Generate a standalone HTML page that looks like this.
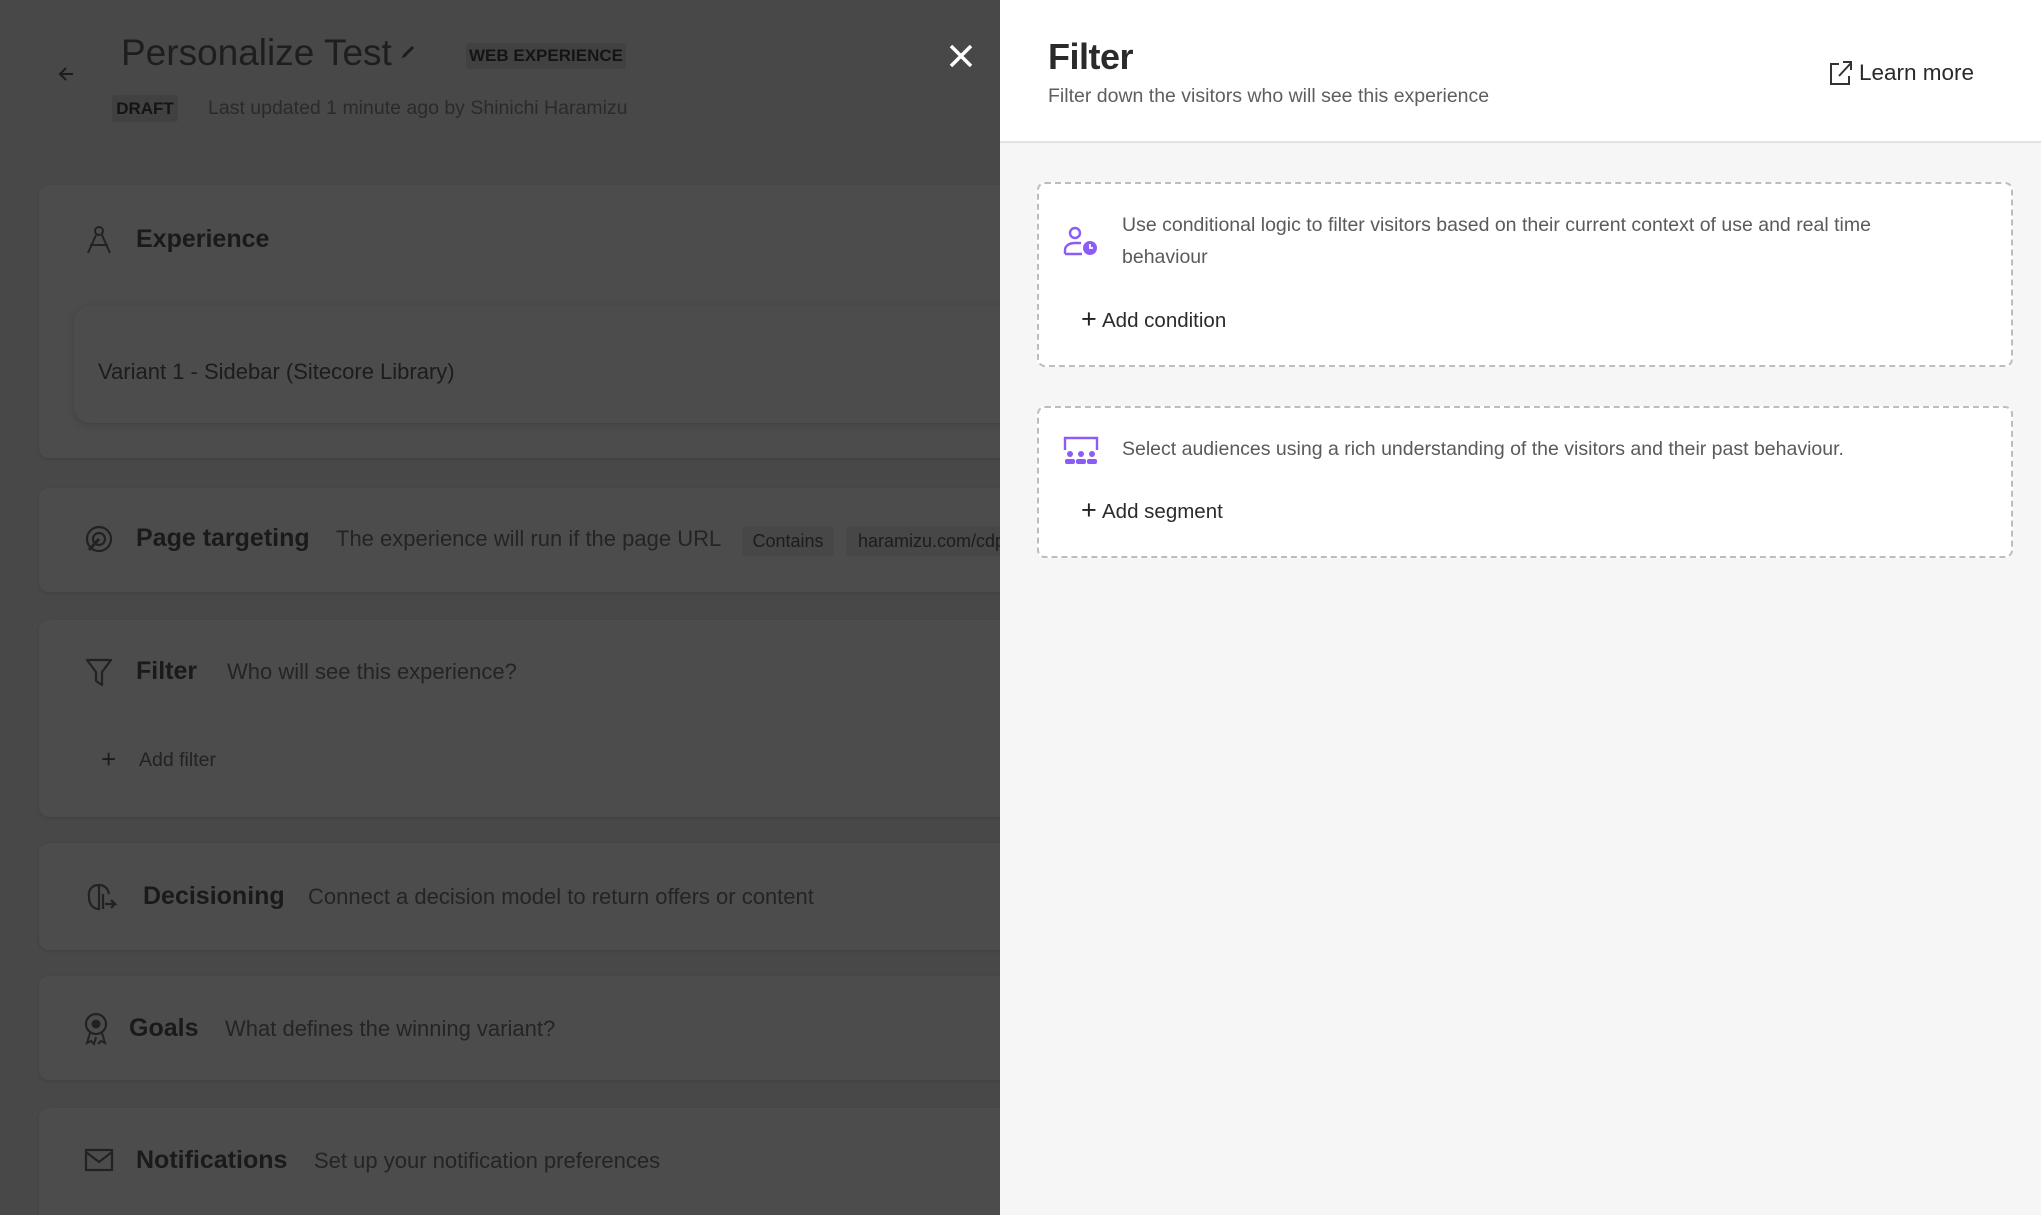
<!DOCTYPE html>
<html style="overflow:hidden;width:2041px;height:1215px"><head><meta charset="utf-8"><style>
*{box-sizing:border-box;margin:0;padding:0}
body{width:2041px;height:1215px;overflow:hidden;font-family:"Liberation Sans",sans-serif;background:#484848;position:relative}
.a{position:absolute;white-space:nowrap}
.card{position:absolute;left:39px;width:980px;background:#4c4c4c;border-radius:10px;box-shadow:0 1px 3px rgba(0,0,0,.12)}
.t{color:#1a1a1a;font-size:25px;font-weight:bold}
.d{color:#242424;font-size:22px}
.ic{position:absolute}
.panel{position:absolute;left:1000px;top:0;width:1041px;height:1215px;background:#f6f6f6}
.hdr{position:absolute;left:0;top:0;width:1041px;height:143px;background:#fff;border-bottom:2px solid #e2e2e2}
.box{position:absolute;left:37px;width:976px;border:2px dashed #bdbdbd;border-radius:8px;background:#fff}
.bt{color:#5a5a5a;font-size:19.5px;line-height:32px}
.add{color:#2b2b2b;font-size:20.5px}
</style></head><body>
<svg class="ic" style="left:56px;top:64px" width="20" height="20" viewBox="0 0 20 20"><path d="M17 10H4M10 4L4 10l6 6" stroke="#1c1c1c" stroke-width="2" fill="none"/></svg>
<div class="a" style="left:121px;top:32px;font-size:37px;color:#1e1e1e">Personalize Test</div>
<svg class="ic" style="left:400px;top:44px" width="16" height="16" viewBox="0 0 16 16"><path d="M3 13l2-1 8-8-1-1-8 8z" fill="#1c1c1c" stroke="#1c1c1c" stroke-width="1.5"/></svg>
<div class="a" style="left:466px;top:43px;width:160px;height:26px;background:#414141;border-radius:3px;color:#141414;font-weight:bold;font-size:17px;line-height:26px;text-align:center">WEB EXPERIENCE</div>
<div class="a" style="left:112px;top:95px;width:66px;height:27px;background:#414141;border-radius:3px;color:#141414;font-weight:bold;font-size:17px;line-height:27px;text-align:center">DRAFT</div>
<div class="a" style="left:208px;top:97px;font-size:19.5px;color:#2a2a2a">Last updated 1 minute ago by Shinichi Haramizu</div>
<svg class="ic" style="left:948px;top:43px" width="26" height="26" viewBox="0 0 26 26"><path d="M3 3L23 23M23 3L3 23" stroke="#fff" stroke-width="3.5"/></svg>

<div class="card" style="top:185px;height:273px"></div>
<svg class="ic" style="left:85px;top:225px" width="28" height="30" viewBox="0 0 28 30"><circle cx="14" cy="6" r="4" stroke="#222" stroke-width="2" fill="none"/><path d="M11 10L3 28M17 10l8 18M5 20h18" stroke="#222" stroke-width="2" fill="none"/></svg>
<div class="a t" style="left:136px;top:225px">Experience</div>
<div class="a" style="left:74px;top:306px;width:960px;height:117px;background:#4c4c4c;border-radius:16px;box-shadow:0 2px 8px rgba(0,0,0,.15)"></div>
<div class="a d" style="left:98px;top:359px;color:#1c1c1c">Variant 1 - Sidebar (Sitecore Library)</div>

<div class="card" style="top:488px;height:104px"></div>
<svg class="ic" style="left:84px;top:524px" width="30" height="30" viewBox="0 0 30 30"><circle cx="15" cy="15" r="12" stroke="#222" stroke-width="2.2" fill="none"/><circle cx="15" cy="15" r="6" stroke="#222" stroke-width="2.2" fill="none"/><path d="M15 15L5 26" stroke="#222" stroke-width="3"/></svg>
<div class="a t" style="left:136px;top:524px">Page targeting</div>
<div class="a d" style="left:336px;top:526px">The experience will run if the page URL</div>
<div class="a" style="left:742px;top:526px;width:92px;height:30px;background:#474747;border-radius:3px;font-size:18px;color:#1c1c1c;line-height:30px;text-align:center">Contains</div>
<div class="a" style="left:846px;top:526px;width:160px;height:30px;background:#474747;border-radius:3px;font-size:18px;color:#1c1c1c;line-height:30px;padding-left:12px;overflow:hidden">haramizu.com/cdp</div>

<div class="card" style="top:620px;height:197px"></div>
<svg class="ic" style="left:85px;top:657px" width="28" height="30" viewBox="0 0 28 30"><path d="M2 3h24L17 15v13l-6-4V15z" stroke="#222" stroke-width="2.2" fill="none" stroke-linejoin="round"/></svg>
<div class="a t" style="left:136px;top:657px">Filter</div>
<div class="a d" style="left:227px;top:659px">Who will see this experience?</div>
<div class="a" style="left:101px;top:744px;font-size:26px;color:#1c1c1c">+</div>
<div class="a" style="left:139px;top:749px;font-size:19.5px;color:#222">Add filter</div>

<div class="card" style="top:843px;height:107px"></div>
<svg class="ic" style="left:85px;top:882px" width="34" height="30" viewBox="0 0 34 30"><path d="M14 3C6 3 3 9 4 15c0 6 3 12 10 12V3zM14 3c5 0 9 3 10 9M18 12v15" stroke="#222" stroke-width="2.2" fill="none"/><path d="M20 22h10l-4-4M30 22l-4 4" stroke="#222" stroke-width="2.2" fill="none"/></svg>
<div class="a t" style="left:143px;top:882px">Decisioning</div>
<div class="a d" style="left:308px;top:884px">Connect a decision model to return offers or content</div>

<div class="card" style="top:976px;height:104px"></div>
<svg class="ic" style="left:84px;top:1012px" width="24" height="34" viewBox="0 0 24 34"><circle cx="12" cy="12" r="10" stroke="#222" stroke-width="2.2" fill="none"/><circle cx="12" cy="12" r="4.5" fill="#222"/><path d="M6 21l-3 10 4-2 3 3 2-7M18 21l3 10-4-2-3 3" stroke="#222" stroke-width="2" fill="none"/></svg>
<div class="a t" style="left:129px;top:1014px">Goals</div>
<div class="a d" style="left:225px;top:1016px">What defines the winning variant?</div>

<div class="card" style="top:1108px;height:107px;border-radius:10px 10px 0 0"></div>
<svg class="ic" style="left:84px;top:1148px" width="30" height="24" viewBox="0 0 30 24"><rect x="2" y="2" width="26" height="20" stroke="#222" stroke-width="2.2" fill="none"/><path d="M2 4l13 10 13-10" stroke="#222" stroke-width="2.2" fill="none"/></svg>
<div class="a t" style="left:136px;top:1146px">Notifications</div>
<div class="a d" style="left:314px;top:1148px">Set up your notification preferences</div>

<div class="panel">
<div class="hdr">
<div class="a" style="left:48px;top:36px;font-size:36px;color:#2a2a2a;font-weight:bold;letter-spacing:-.5px">Filter</div>
<div class="a" style="left:48px;top:85px;font-size:19.5px;color:#5e5e5e">Filter down the visitors who will see this experience</div>
<svg class="ic" style="left:829px;top:60px" width="24" height="26" viewBox="0 0 24 26"><path d="M10 4H2v20h18v-8" stroke="#333" stroke-width="2" fill="none"/><path d="M10 16L22 3M14 2h8v8" stroke="#333" stroke-width="2" fill="none"/></svg>
<div class="a" style="left:859px;top:60px;font-size:22.5px;color:#2a2a2a">Learn more</div>
</div>
<div class="box" style="top:182px;height:185px">
<svg class="ic" style="left:24px;top:42px" width="36" height="32" viewBox="0 0 36 32"><circle cx="12" cy="7" r="5" stroke="#8b5cf6" stroke-width="2.4" fill="none"/><path d="M2 28v-4c0-4 4-7 10-7h6M2 28h17" stroke="#8b5cf6" stroke-width="2.4" fill="none"/><circle cx="27" cy="22" r="7" fill="#8b5cf6"/><path d="M27 18v4h3" stroke="#fff" stroke-width="1.8" fill="none"/></svg>
<div class="a bt" style="left:83px;top:25px;white-space:normal;width:840px">Use conditional logic to filter visitors based on their current context of use and real time behaviour</div>
<div class="a" style="left:42px;top:120px;font-size:27px;color:#222">+</div>
<div class="a add" style="left:63px;top:125px">Add condition</div>
</div>
<div class="box" style="top:406px;height:152px">
<svg class="ic" style="left:24px;top:28px" width="36" height="30" viewBox="0 0 36 30"><path d="M2 14V2h32v12" stroke="#8b5cf6" stroke-width="2.4" fill="none"/><circle cx="7" cy="18" r="3" fill="#8b5cf6"/><circle cx="18" cy="18" r="3" fill="#8b5cf6"/><circle cx="29" cy="18" r="3" fill="#8b5cf6"/><rect x="2" y="23" width="10" height="5" rx="2" fill="#8b5cf6"/><rect x="13" y="23" width="10" height="5" rx="2" fill="#8b5cf6"/><rect x="24" y="23" width="10" height="5" rx="2" fill="#8b5cf6"/></svg>
<div class="a bt" style="left:83px;top:25px">Select audiences using a rich understanding of the visitors and their past behaviour.</div>
<div class="a" style="left:42px;top:87px;font-size:27px;color:#222">+</div>
<div class="a add" style="left:63px;top:92px">Add segment</div>
</div>
</div>
</body></html>
